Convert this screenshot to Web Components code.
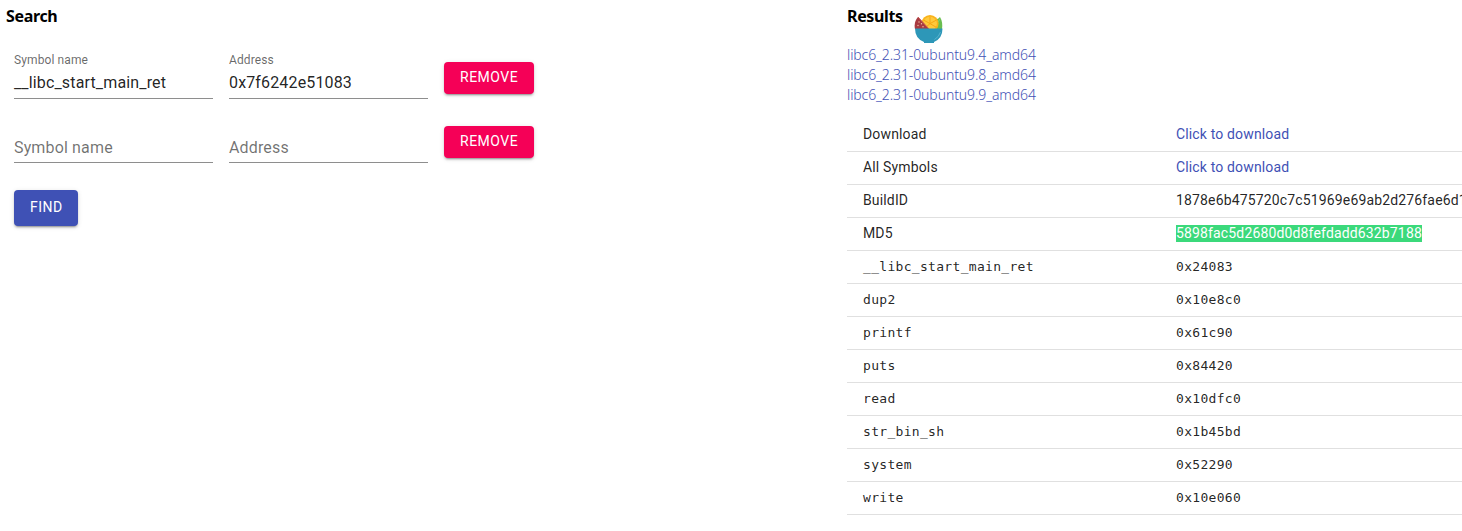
<!DOCTYPE html>
<html lang="en">
<head>
<meta charset="utf-8">
<title>libc database search</title>
<style>
html,body{margin:0;height:100%;overflow:hidden;background:#fff}
body{font-family:Roboto,sans-serif;color:rgba(0,0,0,.87)}
</style>
</head>
<body>
<libc-app></libc-app>
<script>
function define(name, html) {
  const t = document.createElement('template');
  t.innerHTML = html;
  customElements.define(name, class extends HTMLElement {
    constructor() {
      super();
      this.attachShadow({mode: 'open'}).append(t.content.cloneNode(true));
    }
  });
}

define('section-title', `<style>
:host{display:block;font:700 16px/20px "Noto Sans",sans-serif;color:#000;letter-spacing:var(--title-spacing,-.35px)}
</style><slot></slot>`);

define('text-field', `<style>
:host{display:flex;flex-direction:column;box-sizing:border-box;width:199px;height:49px;border-bottom:1px solid #8e8e8e;font:16px/24px Roboto,sans-serif;letter-spacing:.15px}
.label{display:block;height:20px;font-size:12px;line-height:20px;color:rgba(0,0,0,.6);letter-spacing:.11px}
.value{display:block;padding-top:1px}
:host([empty]) .label{display:none}
:host([empty]) .value{color:rgba(0,0,0,.56);padding-top:22px}
</style><span class="label"><slot name="label"></slot></span><span class="value"><slot></slot></span>`);

define('md-button', `<style>
:host{display:flex;box-sizing:border-box;padding-left:16px;width:90px;height:32px;border-radius:4px;background:#f50057;color:#fff;font:450 14px/30px Roboto,sans-serif;letter-spacing:.5px;box-shadow:0 3px 1px -2px rgba(0,0,0,.2),0 2px 2px 0 rgba(0,0,0,.14),0 1px 5px 0 rgba(0,0,0,.12)}
:host([primary]){width:64px;height:36px;line-height:34px;background:#3f51b5}
</style><slot></slot>`);

define('query-row', `<style>
:host{display:flex;gap:16px;height:64px;align-items:flex-start}
md-button{margin-top:12px}
</style><slot></slot><md-button>REMOVE</md-button>`);

define('fruit-bowl', `<style>
:host{display:block;width:30px;height:30px}svg{display:block}
</style><svg width="30" height="30" viewBox="0 0 30 30">
<path d="M19 5Q24 6 26 3Q29 8 28 15H19Z" fill="#69bd50"/>
<path d="M22 14Q23 8 26 5" fill="none" stroke="#92d678" stroke-width=".8"/>
<circle cx="16" cy="9.6" r="8.6" fill="#f9b31c"/>
<circle cx="16" cy="9.6" r="6.9" fill="#ffc93c"/>
<path d="M16 9.6V2.8M16 9.6L10 6.3M16 9.6L22 6.3M16 9.6L22.3 13.3M16 9.6L11 14" stroke="#f7a713" stroke-width="1"/>
<path d="M4 3L15 15H1Q-.5 8 4 3Z" fill="#a83a40"/>
<path d="M4 3L15 15" stroke="#c85a53" stroke-width="1"/>
<g fill="#f2c6a5"><circle cx="5" cy="8" r=".7"/><circle cx="4" cy="11.5" r=".7"/><circle cx="7.5" cy="9.7" r=".7"/><circle cx="9" cy="12.7" r=".7"/></g>
<path d="M1 14.5H28.5Q28.5 24.5 20 28V29H10V28Q1 24.5 1 14.5Z" fill="#2d97b8"/>
<path d="M26.5 18Q25 23 20.5 25.5" fill="none" stroke="#62bad2" stroke-width=".8"/>
</svg>`);

define('libc-link', `<style>
:host{display:block;height:20px;font:300 14px/21px "Noto Sans",sans-serif;color:#3f51b5;letter-spacing:var(--link-spacing,-.1px);white-space:nowrap}
</style><slot></slot>`);

define('result-row', `<style>
:host{display:grid;grid-template-columns:313px 1fr;box-sizing:border-box;height:33px;padding-left:16px;border-bottom:1px solid #e0e0e0;font:14px/30px Roboto,sans-serif;letter-spacing:.15px;white-space:nowrap}
:host([mono]){font:13px/32px "DejaVu Sans Mono",monospace;letter-spacing:.31px}
:host([link]) .value{color:#3f51b5}
:host([selected]) .mark{background:#3bd97b;color:#fff;line-height:17px;height:17px;display:inline-block;vertical-align:top;margin-top:7px}
</style><span><slot name="name"></slot></span><span class="value"><span class="mark"><slot></slot></span></span>`);

define('search-panel', `<style>
:host{display:block;box-sizing:border-box;width:847px;flex:none;padding:6px 0 0 6px}
.form{padding:24px 0 0 8px}
</style><section-title>Search</section-title>
<div class="form">
<query-row><text-field><span slot="label">Symbol name</span>__libc_start_main_ret</text-field><text-field><span slot="label">Address</span>0x7f6242e51083</text-field></query-row>
<query-row><text-field empty>Symbol name</text-field><text-field empty>Address</text-field></query-row>
<md-button primary style="margin-top:12px">FIND</md-button>
</div>`);

define('results-panel', `<style>
:host{display:block;flex:1;min-width:0;padding-top:6px}
header{display:flex;gap:10px;height:38px}
section-title{width:57px;white-space:nowrap}
fruit-bowl{margin-top:8px}
.table{margin-top:15px}
</style><header><section-title>Results</section-title><fruit-bowl></fruit-bowl></header>
<libc-link>libc6_2.31-0ubuntu9.4_amd64</libc-link>
<libc-link>libc6_2.31-0ubuntu9.8_amd64</libc-link>
<libc-link>libc6_2.31-0ubuntu9.9_amd64</libc-link>
<div class="table">
<result-row link><span slot="name">Download</span>Click to download</result-row>
<result-row link><span slot="name">All Symbols</span>Click to download</result-row>
<result-row><span slot="name">BuildID</span>1878e6b475720c7c51969e69ab2d276fae6d1</result-row>
<result-row selected><span slot="name">MD5</span>5898fac5d2680d0d8fefdadd632b7188</result-row>
<result-row mono><span slot="name">__libc_start_main_ret</span>0x24083</result-row>
<result-row mono><span slot="name">dup2</span>0x10e8c0</result-row>
<result-row mono><span slot="name">printf</span>0x61c90</result-row>
<result-row mono><span slot="name">puts</span>0x84420</result-row>
<result-row mono><span slot="name">read</span>0x10dfc0</result-row>
<result-row mono><span slot="name">str_bin_sh</span>0x1b45bd</result-row>
<result-row mono><span slot="name">system</span>0x52290</result-row>
<result-row mono><span slot="name">write</span>0x10e060</result-row>
</div>`);

define('libc-app', `<style>
:host{display:flex;height:531px;overflow:hidden}
</style><search-panel></search-panel><results-panel></results-panel>`);
</script>
</body>
</html>
